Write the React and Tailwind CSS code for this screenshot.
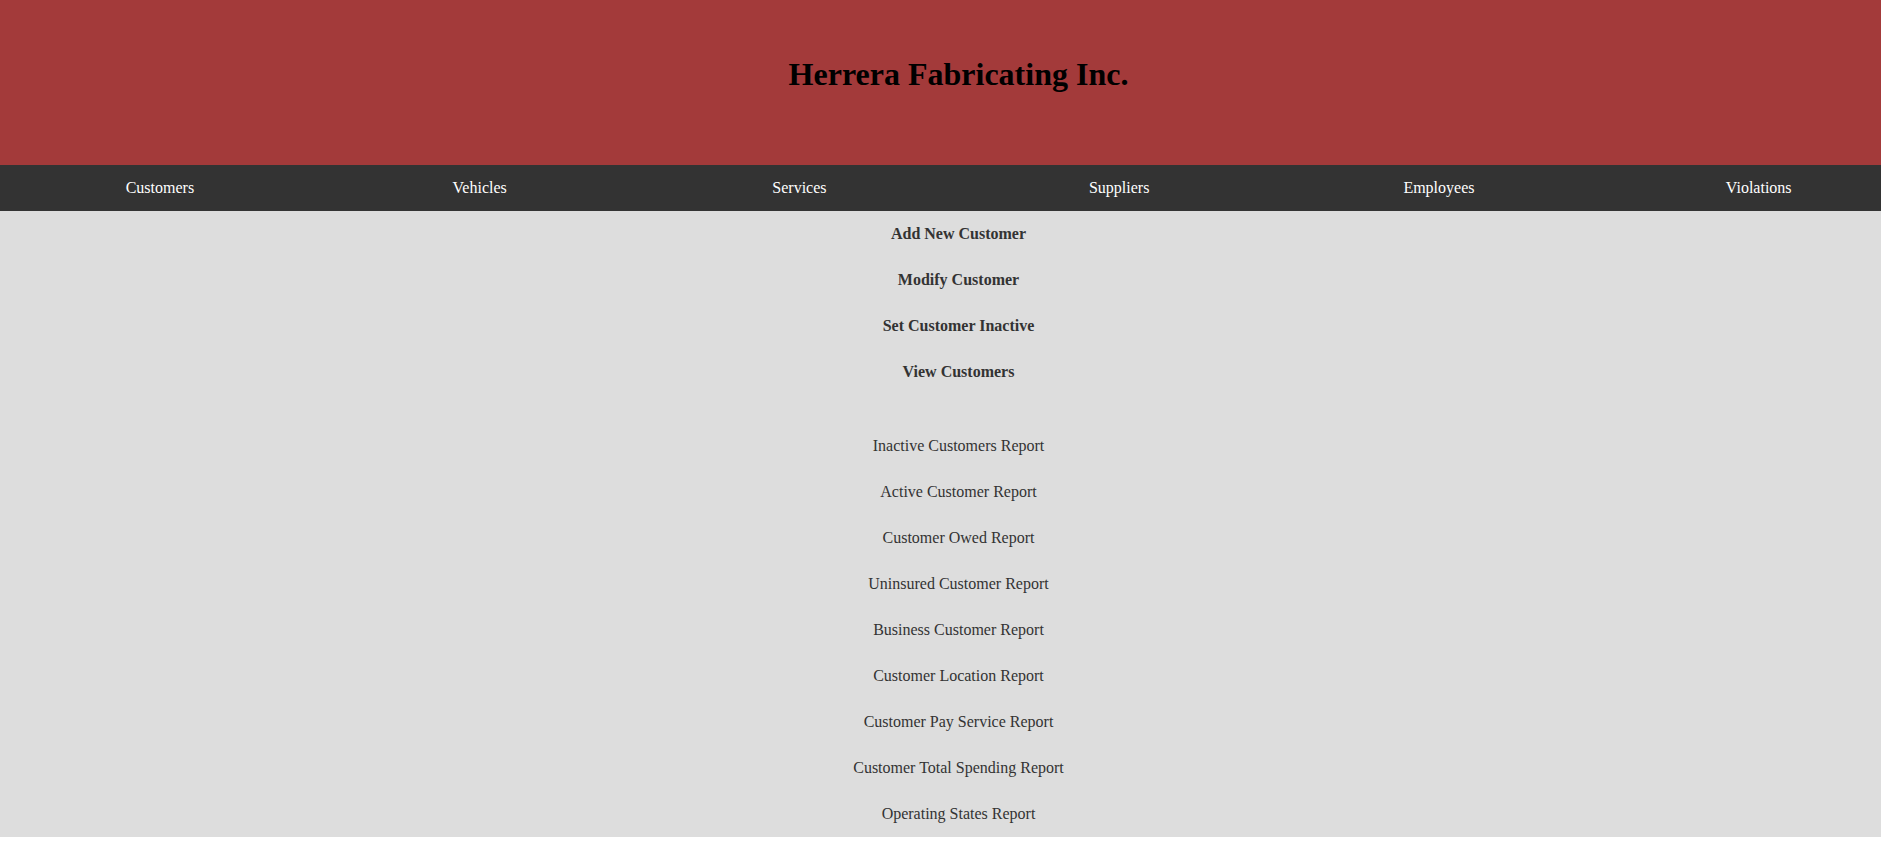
import React from 'react';

const navItems = ['Customers', 'Vehicles', 'Services', 'Suppliers', 'Employees', 'Violations'];

const actions = ['Add New Customer', 'Modify Customer', 'Set Customer Inactive', 'View Customers'];

const reports = [
  'Inactive Customers Report',
  'Active Customer Report',
  'Customer Owed Report',
  'Uninsured Customer Report',
  'Business Customer Report',
  'Customer Location Report',
  'Customer Pay Service Report',
  'Customer Total Spending Report',
  'Operating States Report',
];

export default function App() {
  return (
    <div className="min-h-screen bg-white font-['Liberation_Serif','Times_New_Roman',serif] text-[16px]">
      <header className="h-[165px] bg-[#a33a3a] pl-[36px] pt-[56px]">
        <h1 className="text-center text-[32px] font-bold leading-[37px] text-black">
          Herrera Fabricating Inc.
        </h1>
      </header>

      <nav className="flex h-[46px] overflow-hidden bg-[#333333]">
        {navItems.map((item) => (
          <a
            key={item}
            href="#"
            className="flex w-[17%] shrink-0 items-center justify-center text-white"
          >
            {item}
          </a>
        ))}
      </nav>

      <main className="bg-[#dddddd] pl-[36px] text-[#333333]">
        <div className="flex flex-col">
          {actions.map((item) => (
            <a key={item} href="#" className="flex h-[46px] items-center justify-center font-bold">
              {item}
            </a>
          ))}
        </div>
        <div className="mt-[28px] flex flex-col">
          {reports.map((item) => (
            <a key={item} href="#" className="flex h-[46px] items-center justify-center">
              {item}
            </a>
          ))}
        </div>
      </main>
    </div>
  );
}
